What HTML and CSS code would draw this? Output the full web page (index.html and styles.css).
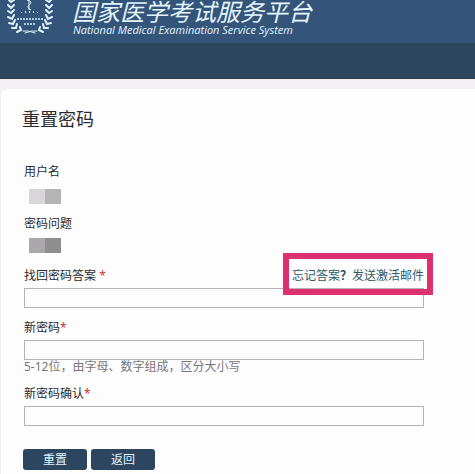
FILE: index.html
```
<!DOCTYPE html>
<html lang="zh-CN">
<head>
<meta charset="utf-8">
<title>重置密码</title>
<link rel="stylesheet" href="styles.css">
</head>
<body>
  <header class="header">
    <svg class="logo" width="46" height="35" viewBox="0 0 46 35" fill="#dcf3ff">
      <defs>
        <g id="leaves" fill="none" stroke="#dcf3ff" stroke-width="2" stroke-linecap="round">
          <path d="M2 0L4 2L7 0"/>
          <path d="M1 5L4 8L7 5"/>
          <path d="M1 11L4 13L7 10"/>
          <path d="M1 17L5 19L7 15"/>
          <path d="M2 23L6 24L8 20"/>
          <path d="M5 28L9 28L10 24"/>
          <path d="M10 32L14 30L13 27"/>
          <path d="M16 31Q21 30 28 33" stroke-width="1"/>
        </g>
      </defs>
      <use href="#leaves"/>
      <use href="#leaves" transform="translate(46 0) scale(-1 1)"/>
      <path d="M22 0V10M20 0Q27 2 22 5Q19 7 24 10" fill="none" stroke="#dcf3ff" stroke-width="1"/>
      <path d="M14 12h1v1h-1z M18 11h1v2h-1z M22 11h1v2h-1z M26 11h1v2h-1z M30 12h1v1h-1z"/>
      <path d="M10 19H37M17 24H29" fill="none" stroke="#a9c9e0" stroke-width="2" stroke-dasharray="2 1"/>
    </svg>
    <div class="brand">
      <div class="brand-name">国家医学考试服务平台</div>
      <div class="brand-sub">National Medical Examination Service System</div>
    </div>
  </header>
  <nav class="nav"></nav>

  <main class="panel">
    <h1 class="title">重置密码</h1>
    <form class="form">
      <div class="info">
        <div class="label">用户名</div>
        <div class="mask"></div>
      </div>
      <div class="info">
        <div class="label">密码问题</div>
        <div class="mask mask-dark"></div>
      </div>

      <div class="field">
        <div class="row">
          <label class="label" for="answer">找回密码答案 <span class="star">*</span></label>
          <a class="forgot" href="#">忘记答案<b>？</b>发送激活邮件</a>
        </div>
        <input class="text" type="text" id="answer">
      </div>

      <div class="field">
        <label class="label" for="pwd">新密码<span class="star">*</span></label>
        <input class="text" type="password" id="pwd">
        <div class="hint">5-12位，由字母、数字组成，区分大小写</div>
      </div>

      <div class="field">
        <label class="label" for="pwd2">新密码确认<span class="star">*</span></label>
        <input class="text" type="password" id="pwd2">
      </div>

      <div class="buttons">
        <button class="btn" type="submit">重置</button>
        <button class="btn" type="button">返回</button>
      </div>
    </form>
  </main>
</body>
</html>
```

FILE: styles.css
```
*
{
  box-sizing:border-box;
}

body
{
  margin:0;
  min-height:100vh;
  display:flex;
  flex-direction:column;
  background-color:#f2f0f4;
  color:#2b2b2f;
  font-family:"Noto Sans", "Noto Sans CJK SC", sans-serif;
  font-size:12px;
  line-height:20px;
}

.header
{
  display:flex;
  gap:19px;
  height:43px;
  padding-left:7px;
  background-color:#34547a;
  color:#e2f6ff;
}

.logo
{
  flex:none;
}

.brand
{
  font-style:italic;
  white-space:nowrap;
}

.brand-name
{
  font-family:"Noto Sans CJK SC", sans-serif;
  font-size:24px;
  line-height:22px;
}

.brand-sub
{
  padding-left:1px;
  font-family:"Open Sans", sans-serif;
  font-size:11px;
  line-height:16px;
}

.nav
{
  height:36px;
  background-color:#2c465e;
  border-bottom:1px solid #33384f;
}

.panel
{
  flex:1;
  margin:10px 0 0 1px;
  padding:18px 24px 4px 23px;
  background-color:#fefdfe;
  border-top-left-radius:6px;
}

.title
{
  margin:0 0 31px -2px;
  font-size:18px;
  font-weight:normal;
  line-height:24px;
}

.form
{
  width:100%;
  max-width:400px;
}

.info
{
  height:52px;
}

.label
{
  display:block;
  line-height:20px;
}

.mask
{
  width:32px;
  height:15px;
  margin:7px 0 0 5px;
  background:linear-gradient(90deg, #d8d6d9 50%, #b5b3b6 50%);
}

.mask-dark
{
  margin-top:4px;
  background:linear-gradient(90deg, #aaa8ab 50%, #8f8d90 50%);
}

.field
{
  margin-bottom:10px;
}

.row
{
  display:flex;
  justify-content:space-between;
}

.star
{
  color:#c8343c;
}

/* highlight frame lies over the input below the link */
.forgot
{
  position:relative;
  color:#2f5a68;
  text-decoration:none;
}

.forgot::after
{
  content:"";
  position:absolute;
  inset:-13px -9px -9px -9px;
  border:6px solid #dc316e;
}

.text
{
  display:block;
  width:100%;
  height:20px;
  margin-top:2px;
  padding:0 4px;
  border:1px solid #b4b2b6;
  background-color:#fefdfe;
  font:inherit;
}

.hint
{
  line-height:14px;
  color:#77757a;
}

.buttons
{
  display:flex;
  gap:4px;
  margin:23px 0 0 -1px;
}

.btn
{
  width:64px;
  height:21px;
  padding:0;
  border:0;
  border-radius:3px;
  background-color:#2c4660;
  color:#e6f6ff;
  font:inherit;
}
```
